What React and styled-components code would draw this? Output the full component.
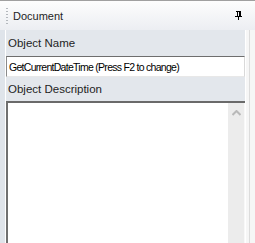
import React from "react";
import styled, { createGlobalStyle } from "styled-components";

const Global = createGlobalStyle`
  html, body { margin: 0; padding: 0; background: #f0f0f0; }
  body { font-family: "Liberation Sans", Arial, sans-serif; }
`;

const Frame = styled.div`
  width: 255px;
  height: 243px;
  display: flex;
  flex-direction: column;
  overflow: hidden;
  border-top: 1px solid #a0a0a0;
  box-sizing: border-box;
  background: #f5f5f5;
`;

const TitleBar = styled.div`
  height: 29px;
  flex: none;
  display: flex;
  align-items: center;
  padding: 0 13px 0 6px;
  background: linear-gradient(#fdfdfd, #eceef2);
  color: #1e1e1e;
  font-size: 11px;
`;

const Grip = styled.div`
  width: 2px;
  height: 18px;
  margin-right: 5px;
  background-image: radial-gradient(circle, #b4b8bd 0.8px, transparent 1px);
  background-size: 2px 3px;
`;

const Title = styled.span`
  flex: 1;
`;

const Body = styled.div`
  flex: 1;
  display: flex;
  min-height: 0;
`;

const LeftStrip = styled.div`
  width: 5px;
  flex: none;
  background: #dfe4ea;
  border-right: 1px solid #ffffff;
`;

const Panel = styled.div`
  width: 239px;
  flex: none;
  display: flex;
  flex-direction: column;
  background: #e3e7ec;
  border-right: 1px solid #ffffff;
`;

const RightStrip = styled.div`
  flex: 1;
  background: #f6f6f6;
  display: flex;
  padding-left: 3px;
`;

const RightLine = styled.div`
  width: 1px;
  background: #dcdcdc;
`;

const Caption = styled.div`
  height: ${p => p.$h}px;
  flex: none;
  display: flex;
  align-items: center;
  padding-left: 2px;
  font-size: 11.5px;
  color: #1e1e1e;
`;

const Input = styled.div`
  height: 21px;
  flex: none;
  box-sizing: border-box;
  background: #ffffff;
  border-top: 1px solid #6e6e6e;
  border-left: 1px solid #8a8a8a;
  border-right: 1px solid #d9d9d9;
  border-bottom: 1px solid #e8e8e8;
  display: flex;
  align-items: center;
  padding-left: 2px;
  font-size: 10.5px;
  letter-spacing: -0.72px;
  color: #000;
  white-space: nowrap;
`;

const TextArea = styled.div`
  flex: 1;
  display: flex;
  background: #ffffff;
  border-top: 2px solid #6a6a6a;
  border-left: 2px solid #707070;
`;

const TextFill = styled.div`
  flex: 1;
`;

const ScrollBar = styled.div`
  width: 16px;
  flex: none;
  background: #ececec;
  display: flex;
  justify-content: center;
  padding-top: 7px;
  border-right: 1px solid #f8f8f8;
`;

const Pin = () => (
  <svg width="7" height="9" viewBox="0 0 7 9">
    <rect x="1" y="0" width="5" height="1" fill="#000" />
    <rect x="2" y="0" width="1" height="5" fill="#000" />
    <rect x="4" y="0" width="2" height="5" fill="#000" />
    <rect x="0" y="5" width="7" height="1" fill="#000" />
    <rect x="3" y="6" width="1" height="3" fill="#000" />
  </svg>
);

const UpArrow = () => (
  <svg width="9" height="6" viewBox="0 0 9 6">
    <path d="M0.5 5 L4.5 1 L8.5 5" fill="none" stroke="#b9b9b9" strokeWidth="2" />
  </svg>
);

export default function App() {
  return (
    <>
      <Global />
      <Frame>
        <TitleBar>
          <Grip />
          <Title>Document</Title>
          <Pin />
        </TitleBar>
        <Body>
          <LeftStrip />
          <Panel>
            <Caption $h={26}>Object Name</Caption>
            <Input>GetCurrentDateTime (Press F2 to change)</Input>
            <Caption $h={24}>Object Description</Caption>
            <TextArea>
              <TextFill />
              <ScrollBar>
                <UpArrow />
              </ScrollBar>
            </TextArea>
          </Panel>
          <RightStrip>
            <RightLine />
          </RightStrip>
        </Body>
      </Frame>
    </>
  );
}
